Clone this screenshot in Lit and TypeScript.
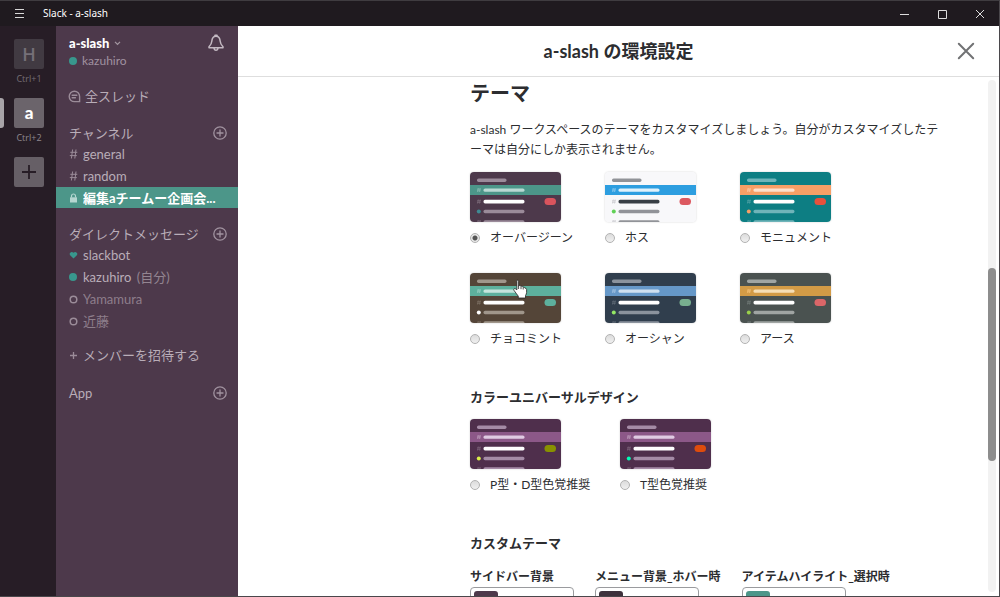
import { LitElement, html, svg, css } from "lit";
import { customElement, property, state } from "lit/decorators.js";

interface Palette {
  id: string;
  name: string;
  bg: string;
  strip: string;
  stripBar: string;
  stripHash: string;
  muted: string;
  strong: string;
  hash: string;
  dot: string;
  badge: string;
}

const themes: Palette[] = [
  { id: "aubergine", name: "オーバージーン", bg: "#4d394b", strip: "#4c9689", stripBar: "#b9d9d3", stripHash: "#86b9b0", muted: "#9b8b9a", strong: "#ffffff", hash: "#7b6a79", dot: "#3f8a94", badge: "#d9545d" },
  { id: "hoth", name: "ホス", bg: "#f8f8fa", strip: "#2d9ee0", stripBar: "#dff1fb", stripHash: "#84c5ed", muted: "#919398", strong: "#383f45", hash: "#cbccd0", dot: "#60d156", badge: "#dc5960" },
  { id: "monument", name: "モニュメント", bg: "#0d7e83", strip: "#f79f66", stripBar: "#fde0cc", stripHash: "#fbc6a2", muted: "#6fb4b9", strong: "#ffffff", hash: "#4c9fa3", dot: "#f79f66", badge: "#e6513c" },
  { id: "choco", name: "チョコミント", bg: "#544538", strip: "#5db09d", stripBar: "#c6e4dc", stripHash: "#93cbbf", muted: "#a0968b", strong: "#ffffff", hash: "#7b6e62", dot: "#ffffff", badge: "#5db09d" },
  { id: "ocean", name: "オーシャン", bg: "#303e4d", strip: "#6698c8", stripBar: "#cfe0f0", stripHash: "#9dbfdf", muted: "#8b939d", strong: "#ffffff", hash: "#5f6a76", dot: "#94e864", badge: "#78af8f" },
  { id: "earth", name: "アース", bg: "#4a5250", strip: "#d39b46", stripBar: "#f6deb5", stripHash: "#f0bd72", muted: "#a0a5a3", strong: "#ffffff", hash: "#6f7775", dot: "#99d04a", badge: "#db6668" },
];

const universal: Palette[] = [
  { id: "pd", name: "P型・D型色覚推奨", bg: "#4f2f4c", strip: "#8c5888", stripBar: "#e0cbe2", stripHash: "#b794b5", muted: "#a58ba6", strong: "#ffffff", hash: "#785f76", dot: "#dcf04a", badge: "#889100" },
  { id: "t", name: "T型色覚推奨", bg: "#4f2f4c", strip: "#8c5888", stripBar: "#e0cbe2", stripHash: "#b794b5", muted: "#a58ba6", strong: "#ffffff", hash: "#785f76", dot: "#00ffb7", badge: "#de4c0d" },
];

const customFields = [
  { id: "side-bg", name: "サイドバー背景", color: "#4d394b" },
  { id: "menu-bg", name: "メニュー背景_ホバー時", color: "#3e313c" },
  { id: "item-bg", name: "アイテムハイライト_選択時", color: "#4c9689" },
];

const miniHash = (y: number, color: string) => svg`
  <path d="M8.300 ${y - 2}l-.7 4M10.200 ${y - 2}l-.7 4M7.200 ${y - 0.8}h3.600M7 ${y + 0.8}h3.600" stroke=${color} stroke-width=".8" fill="none"/>`;

const plusCircle = html`<svg viewBox="0 0 14 14" width="14" height="14" fill="none" stroke="currentColor" stroke-width="1.300" stroke-linecap="round" aria-hidden="true"><circle cx="7" cy="7" r="6.200"/><path d="M7 4v6M4 7h6"/></svg>`;

@customElement("theme-option")
class ThemeOption extends LitElement {
  @property({ attribute: false }) palette!: Palette;
  @property({ type: Boolean }) selected = false;

  static styles = css`
    :host { display: block; }
    .option { display: flex; flex-direction: column; gap: 6px; cursor: pointer; }
    .card { display: block; border-radius: 4px; box-shadow: 0 0 2px rgba(0, 0, 0, 0.2); }
    .line { display: flex; align-items: center; gap: 10px; line-height: 20px; white-space: nowrap; }
    .radio {
      appearance: none; width: 10px; height: 10px; margin: 0; border-radius: 50%;
      border: 1px solid #b2b2b2; background: linear-gradient(#dcdcdc, #f0f0f0); flex: none;
    }
    .radio:checked { background: radial-gradient(circle, #555 0 2px, #e8e8e8 3px); }
  `;

  private pick() {
    this.dispatchEvent(new CustomEvent("pick", { detail: this.palette.id, bubbles: true, composed: true }));
  }

  render() {
    const p = this.palette;
    return html`
      <label class="option">
        <svg class="card" viewBox="0 0 91 50" width="91" height="50" aria-hidden="true">
          <rect width="91" height="50" fill=${p.bg}/>
          <rect x="7" y="6.5" width="29.5" height="3.4" rx="1.6" fill=${p.muted}/>
          <rect y="13" width="91" height="10" fill=${p.strip}/>
          ${miniHash(18, p.stripHash)}
          <rect x="13.5" y="16.4" width="41" height="3.4" rx="1.6" fill=${p.stripBar}/>
          ${miniHash(29.5, p.hash)}
          <rect x="13.5" y="27.8" width="41" height="3.6" rx="1.6" fill=${p.strong}/>
          <rect x="74.5" y="26" width="11.5" height="7" rx="3.5" fill=${p.badge}/>
          <circle cx="8.8" cy="39.5" r="2" fill=${p.dot}/>
          <rect x="13.5" y="37.8" width="41" height="3.4" rx="1.6" fill=${p.muted}/>
          ${miniHash(50, p.hash)}
          <rect x="13.5" y="48.2" width="41" height="3.4" rx="1.6" fill=${p.muted}/>
        </svg>
        <span class="line">
          <input class="radio" type="radio" name="theme" .checked=${this.selected} @change=${this.pick}>
          <span>${p.name}</span>
        </span>
      </label>`;
  }
}

@customElement("team-rail")
class TeamRail extends LitElement {
  static styles = css`
    :host { display: block; flex: none; width: 56px; background: #271d26; }
    .rail { display: flex; flex-direction: column; padding-top: 13px; }
    .team { display: grid; grid-template-columns: 4px 30px; column-gap: 10px; padding-bottom: 9px; }
    .mark { border-radius: 0 3px 3px 0; }
    .current .mark { background: #a8a4a8; }
    .tile {
      width: 30px; height: 30px; padding: 0; border: 0; border-radius: 2px; background: #413a42; color: #757078;
      font: 700 18px/30px "Open Sans", sans-serif; display: grid; place-items: center;
    }
    .first { font-weight: 600; }
    .current .tile { background: #6b646b; color: #fff; font-size: 17px; font-family: Lato, sans-serif; font-weight: 900; }
    .tile.add { background: #665f66; color: #271d26; }
    .key { grid-column: 2; justify-self: center; white-space: nowrap; font: 9px/20px "Open Sans", sans-serif; color: #766e75; }
    .current .key { color: #8f888e; }
  `;
  render() {
    return html`<nav class="rail">
      <div class="team"><span class="mark"></span><button class="tile first">H</button><span class="key">Ctrl+1</span></div>
      <div class="team current"><span class="mark"></span><button class="tile">a</button><span class="key">Ctrl+2</span></div>
      <div class="team"><span class="mark"></span><button class="tile add" aria-label="追加">
        <svg viewBox="0 0 16 16" width="16" height="16" stroke="currentColor" stroke-width="1.800"><path d="M8 1v14M1 8h14"/></svg></button></div>
    </nav>`;
  }
}

@customElement("side-bar")
class SideBar extends LitElement {
  static styles = css`
    :host { display: block; flex: none; width: 182px; background: #4d394b; color: #b9adb8; font-size: 13px; line-height: 22px; }
    button { font: inherit; color: inherit; background: none; border: 0; padding: 0; }
    a { color: inherit; text-decoration: none; }
    svg { display: block; }
    .top { display: flex; justify-content: space-between; padding: 8px 14px 0 13px; }
    .team { display: flex; align-items: center; gap: 5px; color: #fff; font-weight: 900; line-height: 18px; }
    .me { display: flex; align-items: center; gap: 5px; font-size: 12px; line-height: 18px; color: #a091a0; }
    .bell { align-self: flex-start; }
    .block { padding-top: 14px; }
    .threads { padding: 15px 0 1px; }
    .head { display: flex; align-items: center; justify-content: space-between; height: 21px; padding: 0 11px 0 13px; }
    .add { color: #a193a0; }
    .row { display: grid; grid-template-columns: 14px 1fr; align-items: center; height: 22px; padding: 0 12px 0 13px; white-space: nowrap; }
    .wide { grid-template-columns: 17px 1fr; padding-left: 12px; }
    .sign { display: flex; align-items: center; color: #9b8c99; }
    .name { overflow: hidden; text-overflow: ellipsis; }
    .row.active { height: 21px; background: #4c9689; color: #fff; font-weight: 700; }
    .active .name { line-height: 20px; }
    .active .sign { color: #b5d6d0; }
    .faint { color: #8d7e8b; }
    .self { color: #938591; padding-left: 2px; }
    .dot, .ring { width: 8px; height: 8px; border-radius: 50%; box-sizing: border-box; }
    .dot { background: #38978d; }
    .direct { padding-top: 15px; }
    .invite { padding-top: 12px; }
    .apps { padding-top: 16px; }
  `;

  private hash = html`<svg viewBox="0 0 9 10" width="9" height="10" fill="none" stroke="currentColor" stroke-width="1" aria-hidden="true"><path d="M3.600 .5l-1.200 9M7 .5L5.800 9.500M1.300 3.300h7M.8 6.600h7"/></svg>`;
  private ring = html`<svg viewBox="0 0 9 9" width="9" height="9" fill="none" stroke="currentColor" stroke-width="1.500" aria-hidden="true"><circle cx="4.500" cy="4.500" r="3.300"/></svg>`;

  private channel(name: string) {
    return html`<a class="row" href="#"><span class="sign">${this.hash}</span><span class="name">${name}</span></a>`;
  }

  render() {
    return html`
      <header class="top">
        <div>
          <div class="team">a-slash<svg viewBox="0 0 8 6" width="7" height="5" fill="none" stroke="#a396a1" stroke-width="1.500"><path d="M1 1l3 3 3-3"/></svg></div>
          <div class="me"><span class="dot"></span>kazuhiro</div>
        </div>
        <button class="bell" aria-label="通知">
          <svg viewBox="0 0 16 18" width="16" height="18" fill="none" stroke="#c3b9c2" stroke-width="1.500" stroke-linejoin="round"><path d="M8 2.200C5 2.200 4 4.600 3.800 7.200 3.600 9.600 3.200 10.600 1 12.800v1h14v-1c-2.200-2.200-2.600-3.200-2.800-5.600C12 4.600 11 2.200 8 2.200z"/><path d="M7 2.100V1.200h2v.9M6 14c.2 1.600 1 2.200 2 2.200s1.800-.6 2-2.200"/></svg>
        </button>
      </header>
      <div class="threads">
        <a class="row wide" href="#"><span class="sign"><svg viewBox="0 0 14 14" width="13" height="13" fill="none" stroke="currentColor" stroke-width="1.500" stroke-linecap="round"><path d="M12.500 12.500V7A5.600 5.600 0 1 0 7 12.500zM4.500 5.700h5M4.500 8.300h3.500"/></svg></span><span class="name">全スレッド</span></a>
      </div>
      <section class="block">
        <div class="head">チャンネル<button class="add" aria-label="チャンネルを追加">${plusCircle}</button></div>
        ${this.channel("general")}
        ${this.channel("random")}
        <a class="row active" href="#"><span class="sign"><svg viewBox="0 0 9 10" width="9" height="10"><path d="M1 4.300h7V9.500H1z" fill="currentColor"/><path d="M2.500 4.500V3a2 2 0 0 1 4 0v1.500" fill="none" stroke="currentColor" stroke-width="1.200"/></svg></span><span class="name">編集aチームー企画会...</span></a>
      </section>
      <section class="direct">
        <div class="head">ダイレクトメッセージ<button class="add" aria-label="メッセージを作成">${plusCircle}</button></div>
        <a class="row" href="#"><span class="sign"><svg viewBox="0 0 10 9" width="9" height="8"><path d="M5 8.500L1.200 4.800C-.6 2.600 2.800-.6 5 2c2.200-2.600 5.600.6 3.800 2.800z" fill="#38978d"/></svg></span><span class="name">slackbot</span></a>
        <a class="row" href="#"><span class="sign"><span class="dot"></span></span><span class="name">kazuhiro <span class="self">(自分)</span></span></a>
        <a class="row faint" href="#"><span class="sign">${this.ring}</span><span class="name">Yamamura</span></a>
        <a class="row faint" href="#"><span class="sign">${this.ring}</span><span class="name">近藤</span></a>
      </section>
      <section class="invite">
        <a class="row" href="#"><span class="sign"><svg viewBox="0 0 9 9" width="9" height="9" stroke="currentColor" stroke-width="1.300"><path d="M4.500 1v7M1 4.500h7"/></svg></span><span class="name">メンバーを招待する</span></a>
      </section>
      <section class="apps">
        <div class="head">App<button class="add" aria-label="App を追加">${plusCircle}</button></div>
      </section>`;
  }
}

@customElement("app-root")
class AppRoot extends LitElement {
  @state() private chosen = "aubergine";

  static styles = css`
    :host {
      display: flex; flex-direction: column; box-sizing: border-box; height: 100vh; overflow: hidden; position: relative;
      border-top: 1px solid #3f3c40; border-right: 1px solid #4a474b; border-bottom: 1px solid #4a474b;
      background: #fff; color: #2c2d30; font: 12px/20px Lato, "Noto Sans CJK JP", sans-serif;
    }
    button { padding: 0; border: 0; background: none; }
    svg { display: block; }
    .titlebar { display: flex; align-items: center; flex: none; height: 25px; padding: 0 14px; background: #1f1a1f; color: #fff; font: 10px/25px "Noto Sans", sans-serif; }
    .menu { width: 29px; }
    .controls { display: flex; gap: 28px; margin-left: auto; }
    .body { display: flex; flex: 1; min-height: 0; }
    .main { display: flex; flex-direction: column; flex: 1; min-width: 0; }
    .bar { display: grid; grid-template-columns: 42px 1fr 42px; align-items: center; flex: none; height: 50px; border-bottom: 1px solid #dedede; }
    .title { grid-column: 2; margin: 0; text-align: center; font-size: 18px; line-height: 24px; font-weight: 700; }
    .scroller { display: flex; flex: 1; min-height: 0; padding-right: 3px; }
    .content { flex: 1; min-width: 0; padding: 4px 30px 0 232px; overflow: hidden; }
    .track { display: grid; grid-template-rows: 188fr 193fr 131fr; width: 8px; margin: 3px 0 4px; border-radius: 4px; background: #f2f2f2; }
    .thumb { grid-row: 2; border-radius: 4px; background: #8d8d8d; }
    h2 { margin: 0 0 15px; font-size: 20px; line-height: 24px; }
    .lead { margin: 0 0 12px; max-width: 480px; }
    h3 { margin: 38px 0 12px; font-size: 13px; line-height: 20px; }
    .themes { display: grid; grid-template-columns: repeat(3, 135px); row-gap: 25px; }
    .universal { display: grid; grid-template-columns: repeat(2, 150px); }
    .fields { display: flex; gap: 21px; padding-top: 2px; }
    .field { display: flex; flex-direction: column; white-space: nowrap; font-weight: 700; }
    .box { display: flex; align-items: center; gap: 4px; box-sizing: border-box; width: 104px; height: 30px; padding: 3px; border: 1px solid #9a9b9e; border-radius: 4px; }
    .swatch { flex: none; width: 24px; height: 22px; border-radius: 3px; }
    .hex { width: 60px; border: 0; padding: 0; font: inherit; font-weight: 400; }
    .hand { position: absolute; left: 512px; top: 278px; }
  `;

  private option(p: Palette) {
    return html`<theme-option .palette=${p} .selected=${this.chosen === p.id} @pick=${(e: CustomEvent) => (this.chosen = e.detail)}></theme-option>`;
  }

  render() {
    return html`
      <header class="titlebar">
        <button class="menu" aria-label="メニュー"><svg viewBox="0 0 10 9" width="29" height="9" preserveAspectRatio="xMinYMid" stroke="#d8d8d8" stroke-width="1"><path d="M1 .5h9M1 4.500h9M1 8.500h9"/></svg></button>
        <span>Slack - a-slash</span>
        <div class="controls">
          <button aria-label="最小化"><svg viewBox="0 0 10 10" width="10" height="10" stroke="#ddd"><path d="M1 5.500h9"/></svg></button>
          <button aria-label="最大化"><svg viewBox="0 0 10 10" width="10" height="10" stroke="#ddd" fill="none"><path d="M1.500 1.500h8v8h-8z"/></svg></button>
          <button aria-label="閉じる"><svg viewBox="0 0 10 10" width="10" height="10" stroke="#ddd" fill="none"><path d="M1 1l8 8M9 1l-8 8"/></svg></button>
        </div>
      </header>
      <div class="body">
        <team-rail></team-rail>
        <side-bar></side-bar>
        <main class="main">
          <div class="bar">
            <h1 class="title">a-slash の環境設定</h1>
            <button aria-label="設定を閉じる"><svg viewBox="0 0 18 18" width="18" height="18" fill="none" stroke="#717274" stroke-width="2" stroke-linecap="round"><path d="M1.800 1.800l14.400 14.400M16.200 1.800L1.800 16.200"/></svg></button>
          </div>
          <div class="scroller">
            <div class="content">
              <h2>テーマ</h2>
              <p class="lead">a-slash ワークスペースのテーマをカスタマイズしましょう。自分がカスタマイズしたテーマは自分にしか表示されません。</p>
              <div class="themes">${themes.map((p) => this.option(p))}</div>
              <h3>カラーユニバーサルデザイン</h3>
              <div class="universal">${universal.map((p) => this.option(p))}</div>
              <h3>カスタムテーマ</h3>
              <div class="fields">
                ${customFields.map((f) => html`<div class="field">
                  <label for=${f.id}>${f.name}</label>
                  <div class="box"><svg class="swatch" viewBox="0 0 24 22"><rect width="24" height="22" fill=${f.color}/></svg><input class="hex" id=${f.id}></div>
                </div>`)}
              </div>
            </div>
            <div class="track"><div class="thumb"></div></div>
          </div>
        </main>
      </div>
      <svg class="hand" viewBox="0 0 16 20" width="16" height="20" aria-hidden="true"><path d="M5.200 1.200c1 0 1.400.7 1.400 1.500v4.500l.3-.6c.9-.5 1.800 0 2 .8.900-.5 1.900 0 2.100.9.900-.4 1.900.1 2.100 1 .8-.2 1.500.4 1.500 1.300v3c0 1-.6 2-1.100 2.900V19H6.300v-1.800C5 15.500 3 12.800 1.900 11.200c-.7-1.200.7-2.200 1.700-1.300l1.300.9V2.700c0-.8-.6-1.500.3-1.500z" fill="#fff" stroke="#222" stroke-width=".8"/><path d="M6.600 7v3M9 7.800v2.400M11.200 8.500v2" stroke="#222" stroke-width=".8"/></svg>`;
  }
}
